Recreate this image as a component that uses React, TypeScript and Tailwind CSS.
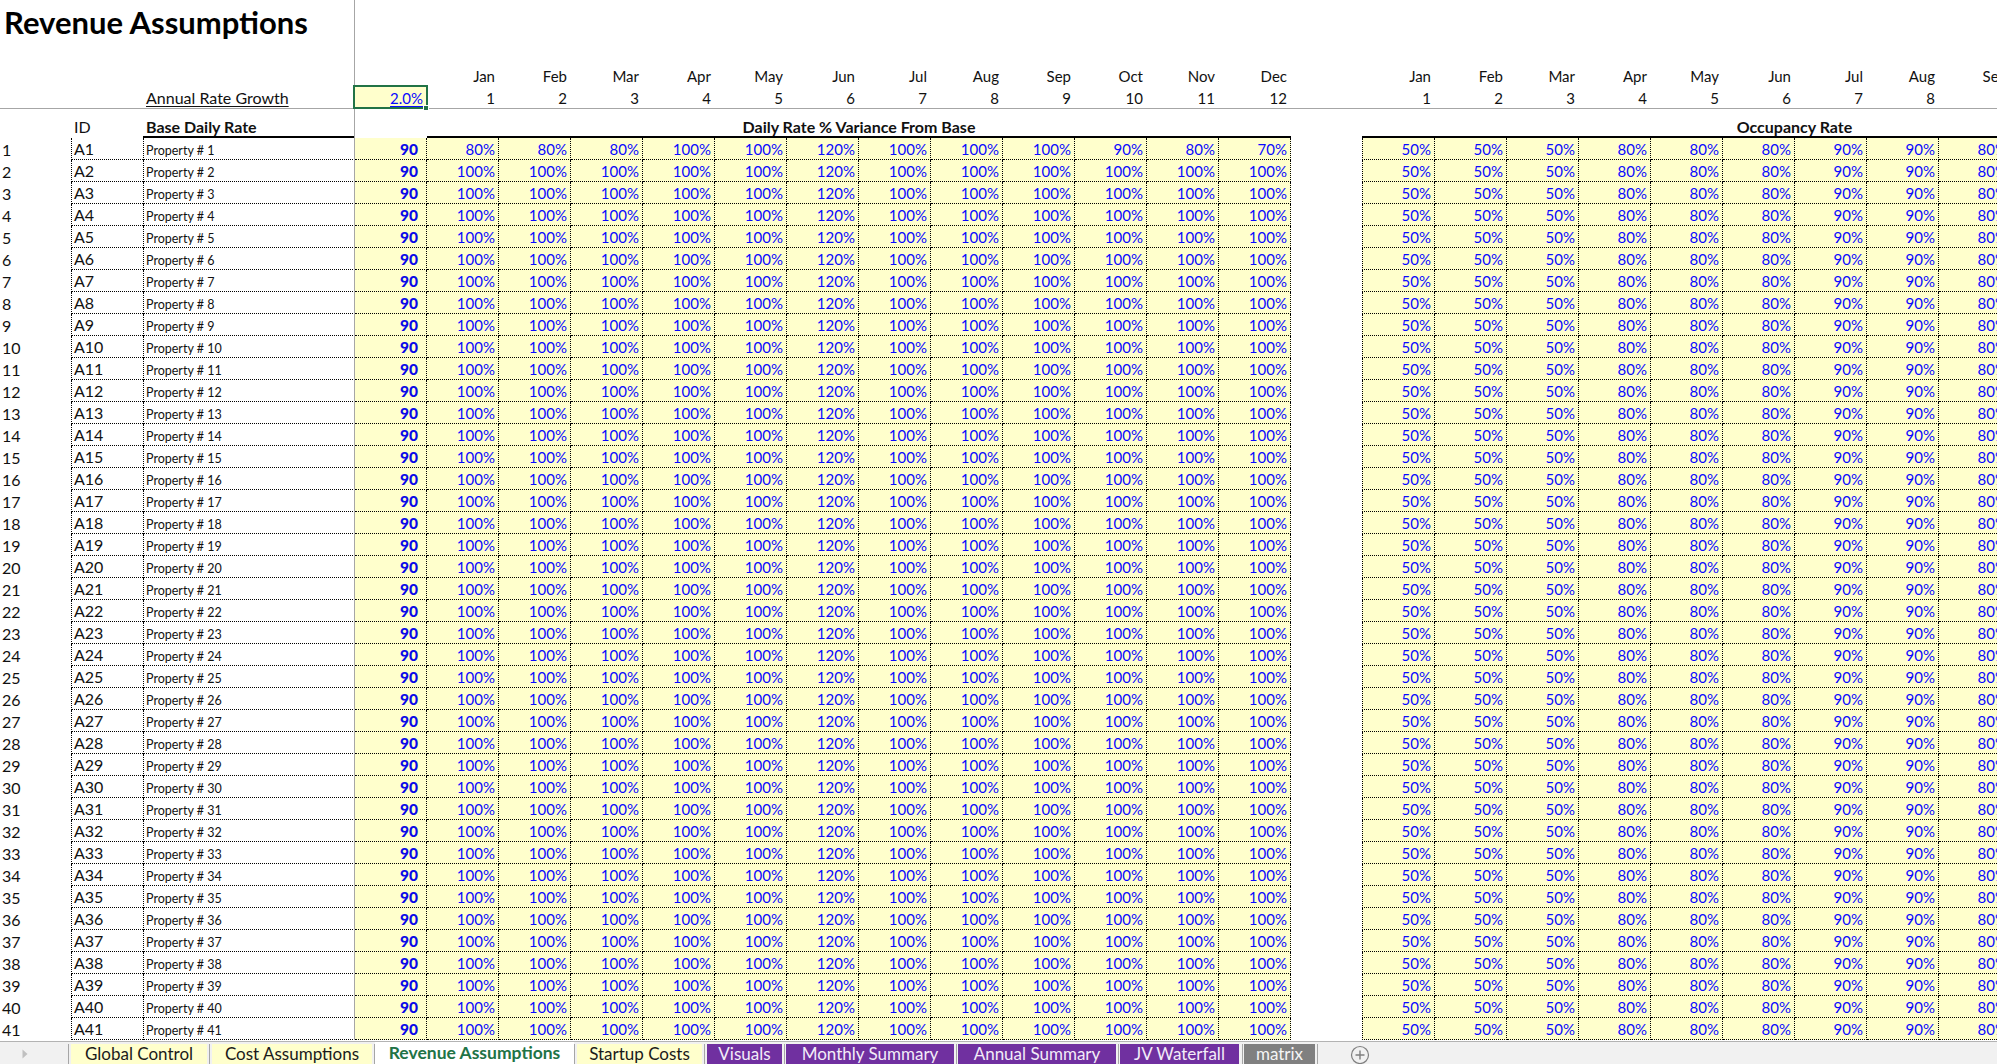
import React from "react";

const months = ["Jan","Feb","Mar","Apr","May","Jun","Jul","Aug","Sep","Oct","Nov","Dec"];
const rowIdx = Array.from({ length: 41 }, (_, i) => i + 1);
const variance1 = [80,80,80,100,100,120,100,100,100,90,80,70];
const varianceN = [100,100,100,100,100,120,100,100,100,100,100,100];
const occupancy = [50,50,50,80,80,80,90,90,80,80,80,80];

const tabs = [
  { label: "Global Control", box: "w-[141px]", w: "w-[136px]", ml: "ml-[2px]", cls: "h-[20px] pb-[2px] text-[17px] bg-[#ffffcc] text-[#1a1a1a]" },
  { label: "Cost Assumptions", box: "w-[165px]", w: "w-[160px]", ml: "ml-[2px]", cls: "h-[20px] pb-[2px] text-[17px] bg-[#ffffcc] text-[#1a1a1a]" },
  { label: "Revenue Assumptions", box: "w-[200px]", w: "w-[199px]", ml: "ml-0", cls: "h-[22px] pb-[2px] pt-[2px] text-[17.5px] bg-white text-[#217346] font-bold" },
  { label: "Startup Costs", box: "w-[130px]", w: "w-[125px]", ml: "ml-[2px]", cls: "h-[20px] pb-[2px] text-[17px] bg-[#ffffcc] text-[#1a1a1a]" },
  { label: "Visuals", box: "w-[80px]", w: "w-[75px]", ml: "ml-[2px]", cls: "h-[20px] pb-[2px] text-[17px] bg-[#7030a0] text-[#f3ecf8]" },
  { label: "Monthly Summary", box: "w-[172px]", w: "w-[168px]", ml: "ml-[1px]", cls: "h-[20px] pb-[2px] text-[17px] bg-[#7030a0] text-[#f3ecf8]" },
  { label: "Annual Summary", box: "w-[162px]", w: "w-[158px]", ml: "ml-[1px]", cls: "h-[20px] pb-[2px] text-[17px] bg-[#7030a0] text-[#f3ecf8]" },
  { label: "JV Waterfall", box: "w-[124px]", w: "w-[119px]", ml: "ml-[1px]", cls: "h-[20px] pb-[2px] text-[17px] bg-[#7030a0] text-[#f3ecf8]" },
  { label: "matrix", box: "w-[75px]", w: "w-[71px]", ml: "ml-[1px]", cls: "h-[20px] pb-[2px] text-[17px] bg-[#808080] text-[#f5f5f5]" },
];

function HeaderCols({ labels, first, lh }: { labels: (string | number)[]; first?: boolean; lh: string }) {
  return (
    <>
      {labels.map((l, i) => (
        <div
          key={i}
          className={`${first && i === 0 ? "w-[73px]" : "w-[72px]"} ${lh} shrink-0 pr-[4px] text-right text-[15px] text-[#111]`}
        >
          {l}
        </div>
      ))}
    </>
  );
}

function PctCell({ v, first }: { v: number; first?: boolean }) {
  return (
    <div
      className={`${first ? "w-[73px] border-l" : "w-[72px]"} h-full shrink-0 border-r border-b border-dotted border-black bg-[#ffffcc] pr-[3px] text-right text-[15px] leading-[23px] text-[#0a0aff]`}
    >
      {v}%
    </div>
  );
}

function Row({ n }: { n: number }) {
  const vals = n === 1 ? variance1 : varianceN;
  return (
    <div className="flex h-[22px]">
      <div className="w-[71px] shrink-0 pl-[2px] text-[16px] leading-[23px] text-[#111]">{n}</div>
      <div className="w-[72px] shrink-0 border-l border-b border-dotted border-black pl-[2px] text-[16px] leading-[22px] text-[#111]">
        A{n}
      </div>
      <div className="relative w-[212px] shrink-0 border-l border-dotted border-black pl-[2px] text-[12.5px] leading-[25px] text-[#111]">
        Property # {n}
        <div className="absolute inset-x-0 bottom-0 border-b border-dotted border-black" />
        <div className="absolute right-0 top-0 bottom-0 w-px bg-[#a6a6a6]" />
      </div>
      <div className="w-[72px] shrink-0 border-r border-b border-dotted border-black bg-[#ffffcc] pr-[8px] text-right text-[15.5px] font-black leading-[23px] text-[#0a0ae8]">
        90
      </div>
      {vals.map((v, i) => (
        <PctCell key={i} v={v} />
      ))}
      <div className="w-[71px] shrink-0" />
      {occupancy.map((v, i) => (
        <PctCell key={i} v={v} first={i === 0} />
      ))}
    </div>
  );
}

export default function App() {
  return (
    <div className="flex h-[1064px] w-[1997px] flex-col overflow-hidden bg-white font-['Lato','Carlito',sans-serif]">
      {/* Frozen header pane */}
      <div className="flex h-[109px] shrink-0 border-b border-[#a6a6a6]">
        <div className="flex w-[355px] shrink-0 flex-col border-r border-[#a6a6a6]">
          <div className="h-[86px] pl-[4px] pt-[2px] text-[31px] font-bold leading-[40px] text-black">
            Revenue Assumptions
          </div>
          <div className="h-[22px] pl-[146px] text-[16px] leading-[24px] text-[#111]">
            <span className="underline underline-offset-2">Annual Rate Growth</span>
          </div>
        </div>
        <div className="flex flex-col pt-[64px]">
          <div className="flex h-[22px]">
            <div className="w-[72px] shrink-0" />
            <HeaderCols labels={months} lh="leading-[24px]" />
            <div className="w-[71px] shrink-0" />
            <HeaderCols labels={months} first lh="leading-[24px]" />
          </div>
          <div className="flex h-[22px]">
            <div className="relative w-[72px] shrink-0 bg-[#ffffcc] pr-[4px] text-right text-[15px] leading-[24px] text-[#0a0aff]">
              <span className="underline underline-offset-2">2.0%</span>
              <div className="absolute -left-[2px] -top-[1px] h-[24px] w-[75px] border-2 border-[#217346]" />
              <div className="absolute -bottom-[3px] -right-[2px] h-[6px] w-[6px] border border-white bg-[#217346]" />
            </div>
            <HeaderCols labels={rowIdx.slice(0, 12)} lh="leading-[25px]" />
            <div className="w-[71px] shrink-0" />
            <HeaderCols labels={rowIdx.slice(0, 12)} first lh="leading-[25px]" />
          </div>
        </div>
      </div>

      {/* Section headings */}
      <div className="flex h-[29px] shrink-0 text-[16px] leading-[35px] text-[#111]">
        <div className="w-[71px] shrink-0" />
        <div className="w-[72px] shrink-0 pl-[3px]">ID</div>
        <div className="relative w-[212px] shrink-0 border-b-2 border-black pl-[3px] font-bold">
          Base Daily Rate
          <div className="absolute -bottom-[2px] right-0 top-0 w-px bg-[#a6a6a6]" />
        </div>
        <div className="w-[72px] shrink-0" />
        <div className="w-[864px] shrink-0 border-b-2 border-black text-center font-bold">
          Daily Rate % Variance From Base
        </div>
        <div className="w-[71px] shrink-0" />
        <div className="w-[865px] shrink-0 border-b-2 border-black text-center font-bold">
          Occupancy Rate
        </div>
      </div>

      {/* Data rows */}
      <div className="h-[903px] shrink-0 overflow-hidden">
        {rowIdx.map((n) => (
          <Row key={n} n={n} />
        ))}
      </div>

      {/* Sheet tabs */}
      <div className="flex h-[23px] shrink-0 items-end border-t border-[#b3b3b3] bg-[#f1f1f1]">
        <div className="flex h-[20px] w-[68px] shrink-0 items-center pl-[22px]">
          <svg width="6" height="10" viewBox="0 0 6 10">
            <path d="M0.5 0.5 L5.5 5 L0.5 9.5 Z" fill="#c0c0c0" />
          </svg>
        </div>
        {tabs.map((t) => (
          <div key={t.label} className={`${t.box} flex h-[20px] shrink-0 items-end border-l border-[#a6a6a6]`}>
            <div className={`${t.w} ${t.ml} ${t.cls} flex shrink-0 items-center justify-center leading-none`}>
              {t.label}
            </div>
          </div>
        ))}
        <div className="h-[20px] shrink-0 border-l border-[#a6a6a6]" />
        <div className="ml-[32px] flex h-[20px] items-start">
          <svg width="20" height="20" viewBox="0 0 20 20" className="mt-[1px]">
            <circle cx="10" cy="10" r="8.5" fill="none" stroke="#7f7f7f" strokeWidth="1.2" />
            <path d="M10 5.5 V14.5 M5.5 10 H14.5" stroke="#7f7f7f" strokeWidth="1.4" />
          </svg>
        </div>
      </div>
    </div>
  );
}
